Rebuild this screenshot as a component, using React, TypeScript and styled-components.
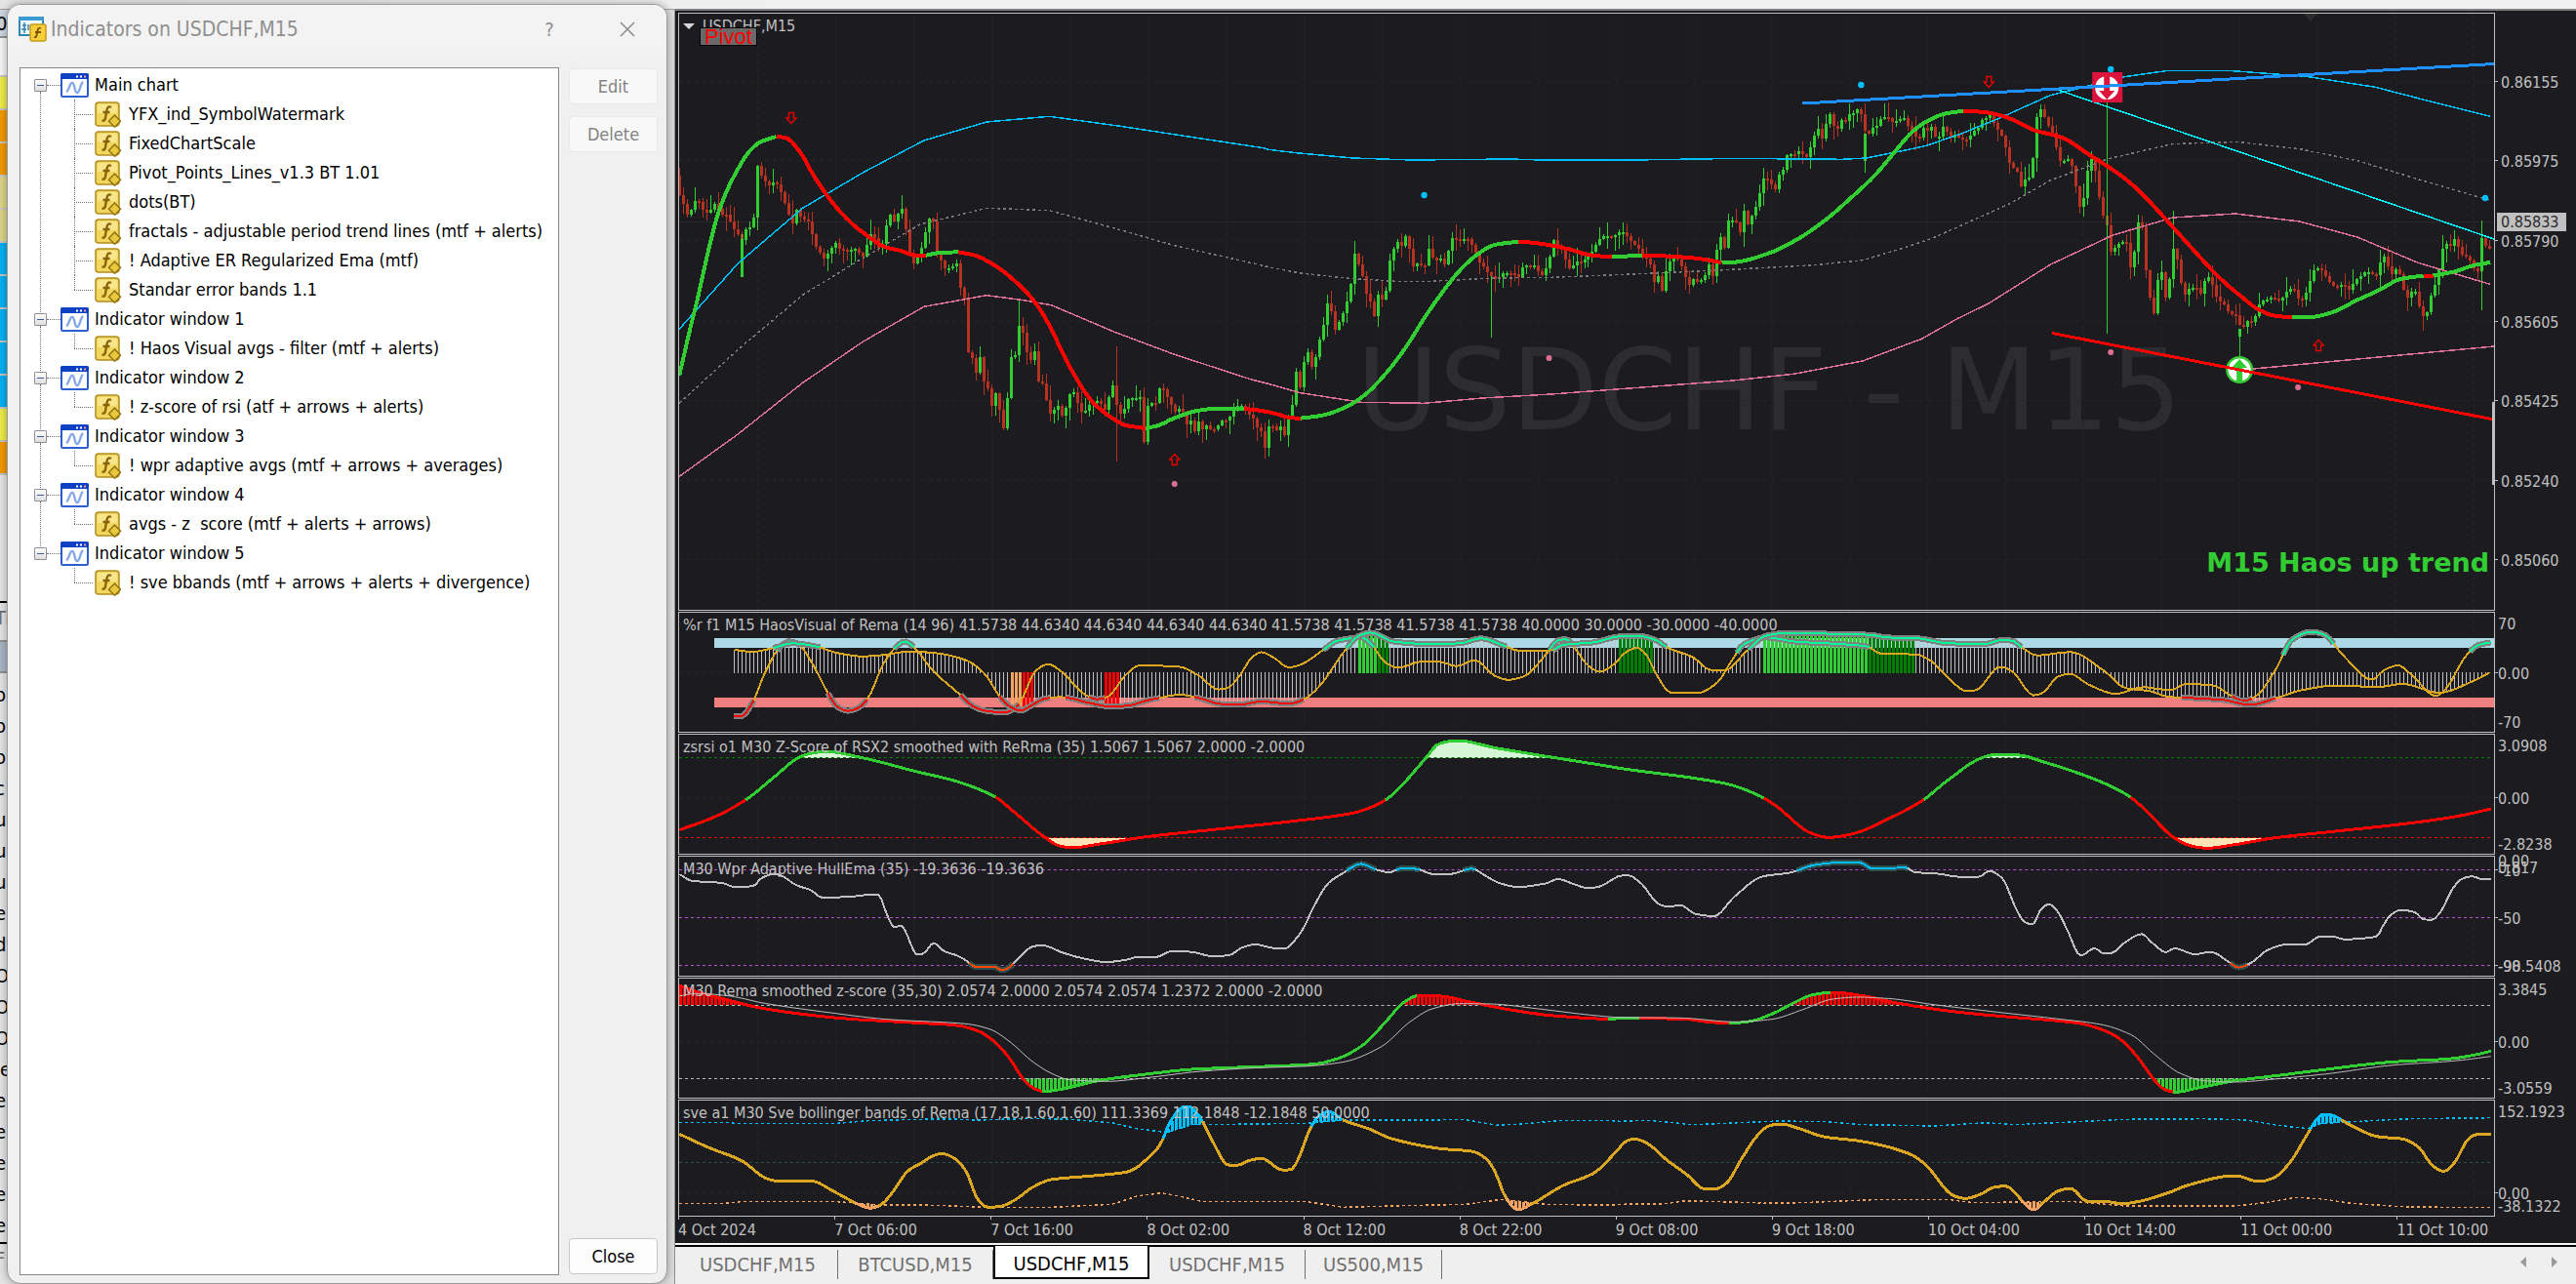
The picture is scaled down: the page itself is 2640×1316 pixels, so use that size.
import React from "react";
import styled, { createGlobalStyle, css } from "styled-components";

const UI = `"DejaVu Sans Condensed", "Noto Sans", sans-serif`;
const INK = "#1c1c20";
const LINE = "#c0c0c0";
const LIME = "#32cd32";
const SKY = "#00bfff";
const ROSE = "#db7093";
const GOLD = "#daa520";

const Global = createGlobalStyle`
  * { box-sizing: border-box; }
  body { margin: 0; background: #ececec; font-family: ${UI}; overflow: hidden; }
  ul { list-style: none; margin: 0; padding: 0; }
  button { font-family: inherit; margin: 0; }
`;

/* ---------- data helpers ---------- */

type Pt = [number, number];
type Frame = { x: number; y: number; sx: number; sy: number };

const early: Frame = { x: 690, y: 0, sx: 650 / 1568, sy: 1 / 3 };
const middle: Frame = { x: 1300, y: 0, sx: 650 / 1568, sy: 1 / 3 };
const late: Frame = { x: 1950, y: 0, sx: 690 / 1566, sy: 630 / 1568 };
const west: Frame = { x: 690, y: 600, sx: 0.625, sy: 1 / 3 };
const east: Frame = { x: 1660, y: 600, sx: 0.625, sy: 1 / 3 };
const westLow: Frame = { x: 690, y: 950, sx: 0.625, sy: 1 / 3 };
const eastLow: Frame = { x: 1660, y: 950, sx: 0.625, sy: 1 / 3 };

const place = (f: Frame, flat: number[]): Pt[] => {
  const out: Pt[] = [];
  for (let i = 0; i < flat.length; i += 2) out.push([f.x + flat[i] * f.sx, f.y + flat[i + 1] * f.sy]);
  return out;
};

const join = (...parts: Pt[][]): Pt[] => {
  const out: Pt[] = [];
  parts.flat().forEach((p) => {
    if (!out.length || p[0] > out[out.length - 1][0] + 1) out.push(p);
  });
  return out;
};

const linearAt = (pts: Pt[], x: number) => {
  if (x <= pts[0][0]) return pts[0][1];
  for (let i = 1; i < pts.length; i++) {
    if (x <= pts[i][0]) {
      const [x0, y0] = pts[i - 1];
      const [x1, y1] = pts[i];
      return y0 + ((y1 - y0) * (x - x0)) / (x1 - x0);
    }
  }
  return pts[pts.length - 1][1];
};

/* one value per bar, eased through the anchors without overshoot */
const perBar = (pts: Pt[], step = 4): Pt[] => {
  const n = pts.length;
  const d = pts.slice(1).map((p, i) => (p[1] - pts[i][1]) / (p[0] - pts[i][0]));
  const m = pts.map((_, i) => {
    if (i === 0) return d[0];
    if (i === n - 1) return d[n - 2];
    return d[i - 1] * d[i] <= 0 ? 0 : (2 * d[i - 1] * d[i]) / (d[i - 1] + d[i]);
  });
  const out: Pt[] = [];
  let i = 0;
  for (let x = pts[0][0]; x <= pts[n - 1][0]; x += step) {
    while (i < n - 2 && x > pts[i + 1][0]) i++;
    const h = pts[i + 1][0] - pts[i][0];
    const t = (x - pts[i][0]) / h;
    const a = 2 * t ** 3 - 3 * t ** 2 + 1;
    const b = t ** 3 - 2 * t ** 2 + t;
    const c = -2 * t ** 3 + 3 * t ** 2;
    const e = t ** 3 - t ** 2;
    out.push([x, a * pts[i][1] + b * h * m[i] + c * pts[i + 1][1] + e * h * m[i + 1]]);
  }
  out.push(pts[n - 1]);
  return out;
};

const toPath = (pts: Pt[]) => "M" + pts.map((p) => `${p[0].toFixed(1)} ${p[1].toFixed(1)}`).join("L");

/* split a curve in runs that share one colour */
const runs = (pts: Pt[], pick: (p: Pt) => string) => {
  const out: { color: string; pts: Pt[] }[] = [];
  pts.forEach((p, i) => {
    const color = pick(p);
    const last = out[out.length - 1];
    if (last && last.color === color) last.pts.push(p);
    else {
      const start: Pt[] = i ? [pts[i - 1], p] : [p];
      out.push({ color, pts: start });
    }
  });
  return out;
};

const noise = (k: number) => {
  const v = Math.sin(k * 127.1 + 11.7) * 43758.5453;
  return v - Math.floor(v);
};

/* ---------- price data ---------- */

const closes = join(
  place(early, [15,600,25,630,35,665,45,640,60,600,65,640,85,655,103,625,123,665,132,660,150,705,160,720,170,740,180,700,190,700,200,660,208,500,218,545,237,570,250,555,265,590,285,660,295,690,305,640,315,670,333,680,352,760,372,795,382,780,400,745,410,765,430,770,450,765,468,790,480,745,490,710,508,765,518,745,528,680,537,655,547,685,557,650,566,640,576,720,585,785,595,815,613,760,623,710,635,660,645,690,653,800,662,800,672,830,690,820,700,810,710,890,720,920,730,1110,740,1100,750,1160,758,1095,768,1180,780,1200,790,1275,797,1200,807,1270,817,1325,826,1210,836,1080,846,1095,855,990,865,1030,875,1095,885,1110,894,1075,904,1195,914,1175,923,1240,933,1278,943,1255,952,1245,962,1285,972,1245,981,1205,991,1205,1000,1245,1010,1270,1020,1260,1030,1240,1050,1230,1067,1260,1077,1215,1087,1180,1096,1250,1106,1275,1115,1255,1125,1225,1135,1225,1155,1220,1163,1365,1173,1240,1193,1240,1203,1185,1213,1200,1222,1225,1241,1270,1255,1250,1270,1310,1280,1290,1290,1335,1300,1285,1310,1330,1320,1300,1330,1330,1345,1310,1357,1290,1367,1295,1380,1270,1390,1250,1410,1245,1425,1280,1435,1290,1445,1320,1455,1330,1464,1390]),
  place(middle, [0,1310,10,1310,20,1325,30,1310,38,1340,50,1270,60,1240,70,1110,78,1200,88,1100,98,1080,108,1140,118,1085,128,1030,138,985,147,915,157,970,166,1025,176,980,186,955,195,920,205,860,214,760,224,825,234,855,243,915,253,930,262,980,272,890,281,925,291,890,300,790,310,760,320,740,330,760,339,722,349,775,359,830,369,805,380,820,390,815,398,745,407,805,417,800,427,795,437,820,446,755,456,725,466,740,475,735,493,735,503,755,513,780,523,815,533,820,541,840,551,850,561,860,580,840,600,840,610,845,620,855,630,810,640,820,650,825,659,810,669,845,679,845,689,810,697,780,706,730,716,765,725,770,735,805,745,830,755,810,765,800,775,810,785,790,800,775,812,750,822,730,835,725,852,730,862,720,872,710,882,715,892,735,902,748,912,755,920,770,930,790,940,800,948,820,957,880,967,840,976,905,986,820,996,800,1005,785,1015,800,1025,825,1035,860,1044,880,1053,855,1063,870,1073,860,1082,845,1092,805,1102,860,1110,765,1120,725,1130,765,1140,665,1150,680,1160,685,1170,725,1178,640,1188,695,1198,658,1207,635,1217,590,1227,540,1237,555,1247,570,1256,585,1265,530,1275,520,1285,470,1295,475,1305,475,1315,460,1324,480,1333,485,1343,445,1352,412,1362,395,1371,430,1381,375,1391,345,1401,395,1411,395,1420,365,1430,375,1440,345,1450,350,1460,328,1468,355,1478,412,1488,412,1497,388,1507,385,1516,362,1526,358,1536,365,1545,378,1555,370]),
  place(late, [5,300,15,325,25,335,33,352,42,350,52,320,62,340,70,320,80,360,88,345,97,320,107,340,116,355,125,340,135,355,150,355,160,345,170,330,180,325,188,300,197,300,207,290,216,325,225,335,234,350,243,385,252,425,262,430,270,440,279,485,288,450,298,455,307,380,315,275,325,280,335,310,343,325,352,345,361,388,370,420,380,405,388,405,397,430,406,490,416,545,425,485,433,420,443,400,452,450,461,525,470,560,479,580,487,655,497,625,507,620,515,615,525,620,533,700,543,620,552,545,561,590,570,730,579,770,588,810,597,680,606,700,615,780,624,690,633,618,643,680,652,740,660,755,670,730,680,735,688,735,697,755,707,695,716,715,725,735,734,770,745,770,754,785,762,805,772,800,779,805,788,840,797,830,806,815,815,825,825,795,834,765,845,770,852,758,862,760,870,762,880,768,888,755,897,740,907,735,916,742,925,775,935,755,943,740,952,705,961,680,978,690,988,710,997,725,1007,730,1016,735,1025,720,1034,735,1042,742,1052,715,1062,710,1070,700,1080,690,1090,698,1100,700,1107,702,1116,645,1125,660,1133,690,1142,705,1152,675,1160,710,1170,755,1178,760,1187,740,1197,745,1206,800,1216,812,1225,785,1233,735,1243,720,1252,665,1260,620,1270,622,1278,630,1288,598,1297,650,1306,650,1316,660,1325,670,1334,695,1343,690,1351,562,1360,655,1369,625]),
);

const candles = Array.from({ length: 465 }, (_, k) => {
  const x = 696 + k * 4;
  const close = linearAt(closes, x);
  const open = k ? linearAt(closes, x - 4) : close - 20;
  const top = Math.min(open, close);
  const bottom = Math.max(open, close, top + 2);
  return {
    x,
    up: close < open,
    top,
    bottom,
    high: top - noise(k) ** 2 * 14 - 1,
    low: bottom + noise(k + 900) ** 2 * 14 + 1,
  };
});

const spikes: { x: number; y1: number; y2: number; up: boolean; body?: [number, number] }[] = [
  { x: 760, y1: 240, y2: 284, up: true, body: [245, 284] },
  { x: 1044, y1: 307, y2: 330, up: true },
  { x: 1144, y1: 355, y2: 473, up: false },
  { x: 1528, y1: 283, y2: 346, up: true },
  { x: 1912, y1: 137, y2: 177, up: true, body: [137, 165] },
  { x: 2160, y1: 105, y2: 342, up: true },
  { x: 2228, y1: 216, y2: 280, up: true },
  { x: 2296, y1: 337, y2: 366, up: true, body: [337, 345] },
  { x: 2544, y1: 226, y2: 318, up: true },
];

const trendRuns: { color: string; pts: Pt[] }[] = [
  { color: LIME, pts: place(early, [15,1155,40,1020,60,920,85,780,110,660,135,580,160,520,185,470,215,437,255,420]) },
  { color: "#ff0000", pts: place(early, [255,420,277,423,315,470,345,535,395,625,440,685,480,725,525,760,560,770,600,785,625,785]) },
  { color: LIME, pts: place(early, [625,785,660,777,705,775]) },
  { color: "#ff0000", pts: place(early, [705,775,745,785,800,820,850,870,895,930,930,1000,965,1090,1000,1170,1040,1240,1085,1285,1120,1308,1168,1317]) },
  { color: LIME, pts: place(early, [1168,1317,1200,1308,1240,1285,1300,1262,1340,1257,1412,1257]) },
  { color: "#ff0000", pts: place(early, [1412,1257,1450,1262,1490,1272,1530,1285,1551,1286]) },
  { color: LIME, pts: place(middle, [80,1286,130,1278,190,1253,240,1213,300,1135,350,1050,385,980,430,900,475,830,520,780,560,753,618,743]) },
  { color: "#ff0000", pts: place(middle, [618,743,660,747,740,765,800,785,850,790]) },
  { color: LIME, pts: place(middle, [850,790,925,785]) },
  { color: "#ff0000", pts: place(middle, [925,785,990,788,1050,793,1090,800,1122,808]) },
  { color: LIME, pts: join(place(middle, [1122,808,1155,806,1240,778,1310,735,1385,670,1440,610,1500,540]), place(late, [0,365,25,335,60,308,100,290,142,283])) },
  { color: "#ff0000", pts: place(late, [142,283,190,286,240,298,310,333,370,350,440,398,490,433,540,475,610,555,680,640,740,710,790,757,830,790,865,805,908,810]) },
  { color: LIME, pts: place(late, [908,810,950,809,1000,797,1060,765,1110,740,1160,712,1213,703]) },
  { color: "#ff0000", pts: place(late, [1213,703,1236,703]) },
  { color: LIME, pts: place(late, [1236,703,1285,693,1330,677,1369,669]) },
];

const bandTop = join(
  place(early, [15,1012,160,810,320,640,470,530,620,432,775,375,930,358,1100,387,1460,455]),
  place(middle, [0,460,70,470,210,486,355,492,600,489,675,492,900,492,1110,488,1240,488,1420,490,1480,486]),
  place(late, [0,385,55,372,140,340,230,300,345,243,425,222,490,200,620,180,770,181,940,195,1100,222,1210,253,1368,297]),
);
const bandMid = join(
  place(early, [15,1240,160,1075,320,907,460,800,610,690,775,640,930,647,1100,705,1240,755,1400,800]),
  place(middle, [5,822,80,840,200,856,330,866,400,865,560,855,700,853,900,843,1100,832,1350,815,1470,800]),
  place(late, [0,634,70,608,250,520,345,460,480,405,630,367,780,362,925,380,1060,410,1200,457,1350,505,1368,510]),
);
const bandLow = join(
  place(early, [15,1465,160,1335,320,1177,470,1050,620,943,775,908,860,922,935,938,1090,1020,1240,1090,1430,1167]),
  place(middle, [0,1180,80,1208,230,1237,385,1240,530,1224,700,1212,1150,1170,1300,1150,1470,1110]),
  place(late, [0,883,45,865,130,812,200,775,345,675,490,600,630,555,775,545,925,565,1060,605,1200,670,1368,725]),
);

/* ---------- oscillator data ---------- */

const haosSlow = perBar(join(
  place(west, [100,198,130,204,165,192,195,178,235,188,270,208,310,218,350,213,385,203,430,208,480,230,510,270,535,340,550,370,570,385,585,372,610,348,635,343,680,360,715,372,745,370,775,355,800,345,830,336,860,345,900,365,930,366,965,357,1010,364,1035,350,1060,310,1100,205,1125,155,1145,145,1160,155,1180,172,1240,180,1290,178,1325,163,1365,187,1385,200,1440,200,1460,183,1510,175]),
  place(east, [0,157,30,155,60,168,80,192,120,220,150,260,172,262,210,200,240,155,270,147,410,152,440,160,490,163,540,178,600,180,628,168,645,170,660,190,685,215,740,205,795,262,830,315,870,325,900,342,945,347,990,352,1035,367,1080,345,1120,322,1175,308,1245,312,1285,303,1345,330,1400,295,1428,268]),
));
const haosFast = perBar(join(
  place(west, [100,402,112,402,130,360,150,270,175,190,190,172,205,180,225,230,255,335,270,375,288,386,305,375,320,345,345,240,365,190,380,172,395,190,425,260,470,335,495,375,520,388,545,390,565,370,595,262,615,242,635,262,675,335,695,350,710,345,745,270,765,246,830,250,860,275,895,320,910,315,930,275,950,220,965,205,985,222,1010,252,1030,243,1065,200,1090,170,1130,160,1145,180,1170,240,1190,253,1225,235,1255,234,1285,248,1315,230,1350,280,1370,290,1395,280,1435,205,1450,170,1465,165,1480,195,1500,245,1520,265,1545,240]),
  place(east, [0,225,15,200,30,192,45,215,60,270,85,330,130,330,160,300,185,230,205,180,240,160,290,173,340,178,375,182,405,187,430,210,485,212,510,230,540,285,570,325,585,322,625,250,645,265,680,338,695,330,720,280,740,272,770,305,815,333,860,313,905,322,930,303,975,308,1000,335,1025,355,1045,340,1075,265,1105,165,1135,143,1155,150,1190,220,1235,290,1255,260,1278,246,1300,275,1340,340,1355,320,1390,215,1410,183,1430,175]),
));
const haosBars: [number, number, string][] = [
  [1035, 1046, "#f4a460"],
  [1046, 1059, "#ff0000"],
  [1131, 1147, "#ff0000"],
  [1391, 1410, LIME],
  [1410, 1423, "#008000"],
  [1658, 1695, "#008000"],
  [1806, 1915, LIME],
  [1915, 1963, "#008000"],
];

const zsrsi = perBar(join(
  place(west, [10,752,70,710,122,655,165,590,210,525,230,515,250,511,310,530,400,573,460,600,528,650,555,690,610,775,635,802,655,806,700,795,780,772,880,752,1030,722,1115,700,1150,678,1172,655,1200,605,1235,530,1255,488,1285,477,1350,500,1440,528,1540,558]),
  place(east, [0,562,120,592,180,612,230,647,255,675,315,762,343,775,380,765,450,710,500,658,535,605,595,530,615,521,650,521,700,545,785,600,832,643,860,685,912,778,940,802,965,808,1010,797,1080,775,1170,757,1310,728,1380,708,1430,687]),
));

const wpr = perBar(join(
  place(west, [10,888,30,908,80,915,100,927,130,925,145,900,165,887,180,895,200,920,225,937,245,960,290,957,330,950,337,952,350,1010,362,1050,375,1047]),
  place(westLow, [380,10,400,85,410,82,427,50,445,75,465,88,480,103,495,122,525,122,540,133,550,125,570,90,590,60,605,57,640,80,675,98,710,108,740,102,765,92,790,93,820,74,850,77,885,90,910,88,935,62,955,54,985,65,1005,66,1020,40,1035,0]),
  place(west, [1050,990,1075,915,1100,883,1115,865,1127,856,1155,875,1175,882,1195,870,1220,872,1245,887,1275,887,1310,871,1330,890,1355,915,1385,927,1430,917,1452,903,1475,917,1500,930,1515,928,1545,900]),
  place(east, [0,893,15,892,35,915,65,980,80,988,100,983,125,1010,155,1017,190,955,235,895,280,883,320,860,355,853,395,853,415,870,430,870,470,868,485,882,520,886,560,896,590,896,607,878,628,900,650,990,665,1035,678,1042,692,995,705,980,720,1005]),
  place(eastLow, [735,10,757,88,780,66,795,82,808,80,828,50,857,22,875,50,897,78,910,66,945,84,970,77,1000,108,1015,125,1035,112,1065,70,1095,54,1125,54,1150,30,1170,30,1190,38,1243,30,1252,0]),
  place(east, [1265,1015,1282,998,1305,1005,1320,1027,1333,1028,1345,1010,1370,925,1385,900,1400,895,1415,903,1430,903]),
), 3);

const zScore = perBar(join(
  place(westLow, [10,180,40,200,90,225,140,248,220,270,290,283,380,293,465,303,500,320,525,350,550,400,575,470,590,495,608,506,640,498,700,472,780,452,850,438,940,431,1050,422,1090,405,1130,365,1165,300,1200,230,1225,210,1260,213,1310,232,1380,257,1450,274,1540,283]),
  place(eastLow, [0,281,38,281,110,284,150,293,180,296,215,290,250,268,290,230,315,210,350,201,400,212,450,232,500,248,560,263,640,277,750,295,795,318,825,350,850,400,880,475,895,500,912,508,950,495,1010,473,1080,457,1160,438,1270,415,1360,406,1400,395,1430,382]),
));
const zGreen: [number, number][] = [[1070, 1456], [1652, 1684], [1773, 1879], [2230, 2560]];
const zSignal = perBar(join(
  place(westLow, [10,212,40,205,90,212,150,235,250,262,350,284,480,298,520,315,550,350,590,415,620,450,650,470,710,475,780,463,860,445,950,434,1040,428,1100,415,1160,370,1210,290,1245,252,1290,236,1340,237,1420,252,1500,270]),
  place(eastLow, [0,278,100,280,190,292,250,284,300,255,350,222,390,216,440,220,520,240,620,262,720,283,790,300,840,332,880,395,920,450,960,473,1010,477,1080,467,1160,452,1270,425,1370,412,1430,398]),
));

const sve = perBar(join(
  place(westLow, [10,637,60,680,110,717,155,775,170,781,225,781,265,815,300,850,323,865,340,855,360,815,385,750,405,728,425,705,440,697,460,710,480,750,500,840,515,862,535,860,560,840,590,800,620,777,690,765,745,753,785,700,800,665,815,600,835,555,845,552,860,575,885,660,910,732,925,733,945,718,965,712,1000,748,1015,745,1025,715,1045,620,1060,580,1075,567,1100,595,1140,620,1180,652,1260,682,1310,690,1335,715,1350,760,1365,830,1385,870,1410,850,1460,795,1510,757]),
  place(eastLow, [0,680,10,660,25,652,45,665,80,720,110,760,140,806,155,807,175,790,200,715,225,645,245,612,265,606,295,620,335,645,400,660,475,697,500,727,550,828,568,835,595,820,615,800,635,797,650,820,680,870,700,840,720,812,740,804,768,844,800,845,825,851,850,845,900,818,935,793,1010,765,1050,783,1075,770,1100,725,1125,650,1145,590,1155,576,1165,577,1200,610,1245,645,1285,652,1310,675,1335,735,1353,752,1370,725,1395,648,1410,637,1430,639]),
));
const sveUpper = join(
  place(westLow, [10,601,90,602,100,604,270,604,320,596,400,592,460,591,500,594,590,589,650,592,720,602,760,620,810,632,850,608,920,607,1040,604,1100,594,1300,593,1350,610,1400,605,1450,596,1540,596]),
  place(eastLow, [0,598,50,595,120,608,260,597,340,599,400,608,520,612,600,602,650,608,830,592,960,590,1030,594,1080,610,1130,620,1150,605,1230,596,1300,590,1430,587]),
);
const sveLower = join(
  place(westLow, [10,850,85,850,110,845,270,845,340,855,430,856,510,862,620,862,720,853,760,828,800,818,830,828,870,845,1040,845,1100,862,1200,857,1300,853,1360,838,1430,853,1540,856]),
  place(eastLow, [0,853,70,852,110,842,240,849,300,848,430,838,540,838,580,848,740,844,830,858,1010,858,1060,848,1110,832,1150,836,1200,850,1290,861,1430,863]),
);

/* ---------- page shell ---------- */

const Page = styled.div`
  position: relative;
  display: flex;
  flex-direction: column;
  height: 100vh;
  min-height: 900px;
  background: #e6e6e6;
`;
const ToolStrip = styled.div`
  flex: none;
  height: 9px;
  background: linear-gradient(90deg, #e4e4e4, #f0f0f0 30%);
`;
const Body = styled.div`
  flex: 1;
  min-height: 0;
  display: flex;
`;

/* ---------- market watch ---------- */

const Market = styled.aside`
  flex: none;
  width: 692px;
  display: flex;
  overflow: hidden;
  background: #e4e4e4;
  border-top: 1px solid #a0a0a0;
  border-right: 1px solid #909090;
`;
const MarketList = styled.div`
  flex: 1;
  min-width: 0;
  display: flex;
  flex-direction: column;
`;
const Splitter = styled.div`
  flex: none;
  width: 18px;
  background: #dcdcdc;
`;
const Quote = styled.div<{ $bg: string }>`
  flex: none;
  height: 34px;
  border-bottom: 2px solid #c4c4c4;
  background: ${(p) => p.$bg};
`;
const QuoteHead = styled.div`
  flex: none;
  height: 29px;
  padding-left: 1px;
  border-bottom: 2px solid #909090;
  background: #cdd6e2;
  font-size: 20px;
  line-height: 28px;
  text-indent: -5px;
`;
const Gap = styled.div<{ $h: number; $bg?: string; $line?: string }>`
  flex: none;
  height: ${(p) => p.$h}px;
  background: ${(p) => p.$bg || "transparent"};
  border-bottom: 2px solid ${(p) => p.$line || "transparent"};
`;
const NavRow = styled.div<{ $dim?: boolean }>`
  flex: none;
  height: 32px;
  line-height: 30px;
  font-size: 20px;
  text-indent: -5px;
  white-space: nowrap;
  color: ${(p) => (p.$dim ? "#707070" : "#000")};
`;

/* ---------- dialog ---------- */

const Dialog = styled.section`
  position: absolute;
  left: 7px;
  top: 4px;
  bottom: 0;
  width: 677px;
  display: flex;
  flex-direction: column;
  background: #f0f0f0;
  border: 1px solid #9c9c9c;
  border-radius: 14px;
  box-shadow: 0 0 8px rgba(0, 0, 0, 0.35);
  overflow: hidden;
`;
const TitleBar = styled.header`
  flex: none;
  height: 50px;
  display: flex;
  align-items: center;
  padding: 0 22px 0 11px;
  background: #f3f3f3;
  color: #8f8f8f;
`;
const Title = styled.h1`
  flex: 1;
  margin: 0 0 0 4px;
  font-size: 21px;
  font-weight: 400;
`;
const TitleButton = styled.button`
  width: 36px;
  height: 36px;
  margin-left: 44px;
  padding: 0;
  border: 0;
  background: none;
  color: #8f8f8f;
  font-size: 20px;
  line-height: 36px;
  display: grid;
  place-items: center;
`;
const DialogBody = styled.div`
  flex: 1;
  min-height: 0;
  display: flex;
  gap: 10px;
  padding: 14px 9px 8px 12px;
`;
const Tree = styled.div`
  flex: 1;
  min-width: 0;
  overflow: hidden;
  background: #fff;
  border: 1px solid #828790;
  padding-top: 2px;
  font-size: 18px;
  line-height: 30px;
`;
const Group = styled.li`
  position: relative;
  &:not(:last-child)::before {
    content: "";
    position: absolute;
    left: 20px;
    top: 22px;
    bottom: -8px;
    border-left: 1px dotted #707070;
  }
`;
const GroupRow = styled.div`
  display: flex;
  align-items: center;
  height: 30px;
  padding-left: 14px;
  white-space: nowrap;
`;
const Toggle = styled.button`
  width: 13px;
  height: 13px;
  padding: 0;
  border: 1px solid #919191;
  border-radius: 1px;
  background: linear-gradient(#fff, #dedede);
  display: grid;
  place-items: center;
  &::after {
    content: "";
    width: 7px;
    height: 1px;
    background: #3a5a9a;
  }
`;
const Dots = styled.span<{ $w: number }>`
  flex: none;
  width: ${(p) => p.$w}px;
  border-top: 1px dotted #707070;
`;
const GroupName = styled.span`
  margin-left: 6px;
`;
const Leaf = styled.li`
  position: relative;
  display: flex;
  align-items: center;
  gap: 2px;
  height: 30px;
  margin-left: 55px;
  white-space: pre;
  &::before {
    content: "";
    position: absolute;
    left: 0;
    top: 0;
    height: 15px;
    border-left: 1px dotted #707070;
  }
  &:not(:last-child)::before {
    height: 30px;
  }
`;
const LeafName = styled.span`
  margin-left: 5px;
`;
const Actions = styled.div`
  flex: none;
  width: 91px;
  display: flex;
  flex-direction: column;
  gap: 12px;
  padding: 1px 0;
`;
const PushButton = styled.button<{ $last?: boolean }>`
  height: 37px;
  padding: 0;
  border: 1px solid #e8e8e8;
  border-radius: 4px;
  background: #f8f8f8;
  color: #838383;
  font-size: 18px;
  ${(p) =>
    p.$last &&
    css`
      margin-top: auto;
      border-color: #c8c8c8;
      background: #fdfdfd;
      color: #000;
    `}
`;

const TitleIcon = () => (
  <svg width="29" height="26" viewBox="0 0 29 26">
    <rect x="1" y="1" width="24" height="18" fill="#eef8fd" stroke="#2f86b5" strokeWidth="2" />
    <rect x="0" y="0" width="26" height="4" fill="#3b9bd0" />
    <path d="M6 6v11M4 9h4M3 13h5M10 8v6" stroke="#2f7fae" strokeWidth="1.4" fill="none" />
    <rect x="12" y="8" width="16" height="17" rx="2" fill="#f7cf3b" stroke="#c89b12" strokeWidth="1.5" />
    <path d="M23 12c-2-1-3 0-3.400 2l-1 5c-.3 2-1.200 2.600-2.600 2M17 16h6" stroke="#7a5200" strokeWidth="1.800" fill="none" />
  </svg>
);
const WindowIcon = () => (
  <svg width="29" height="25" viewBox="0 0 29 25">
    <rect x="1" y="1" width="27" height="23" rx="1.500" fill="#fff" stroke="#2b5fd0" strokeWidth="2" />
    <path d="M0 2a2 2 0 0 1 2-2h25a2 2 0 0 1 2 2v4H0z" fill="#0b3fc4" />
    <path d="M16 3.500h2M20 3.500h2" stroke="#fff" strokeWidth="2" />
    <path d="M24 3.500h2" stroke="#ff9a8a" strokeWidth="2" />
    <path d="M6 19c3-1 3-9 6-9s2 10 5 10 3-9 6-11" fill="none" stroke="#86a8ea" strokeWidth="2.400" />
  </svg>
);
const FunctionIcon = () => (
  <svg width="28" height="28" viewBox="0 0 28 28">
    <rect x="1" y="2" width="24" height="24" rx="3" fill="#f1d75f" stroke="#b08d1e" strokeWidth="1.500" />
    <rect x="3" y="4" width="20" height="9" rx="2" fill="#f8e68c" />
    <path d="M17 7c-3-1.500-4 0-4.500 3l-1.500 8c-.4 2.500-1.500 3-3.500 2.500M8.500 12h7" stroke="#8a6408" strokeWidth="2.400" fill="none" />
    <path d="M20.500 15l6 6.200-6 6-6-6z" fill="#e9c83d" stroke="#927112" strokeWidth="1.500" />
  </svg>
);

const groups = [
  {
    name: "Main chart",
    items: [
      "YFX_ind_SymbolWatermark",
      "FixedChartScale",
      "Pivot_Points_Lines_v1.3 BT 1.01",
      "dots(BT)",
      "fractals - adjustable period trend lines (mtf + alerts)",
      "! Adaptive ER Regularized Ema (mtf)",
      "Standar error bands 1.1",
    ],
  },
  { name: "Indicator window 1", items: ["! Haos Visual avgs - filter (mtf + alerts)"] },
  { name: "Indicator window 2", items: ["! z-score of rsi (atf + arrows + alerts)"] },
  { name: "Indicator window 3", items: ["! wpr adaptive avgs (mtf + arrows + averages)"] },
  { name: "Indicator window 4", items: ["avgs - z  score (mtf + alerts + arrows)"] },
  { name: "Indicator window 5", items: ["! sve bbands (mtf + arrows + alerts + divergence)"] },
];

const IndicatorDialog = () => (
  <Dialog aria-label="Indicators on USDCHF,M15">
    <TitleBar>
      <TitleIcon />
      <Title>Indicators on USDCHF,M15</Title>
      <TitleButton>?</TitleButton>
      <TitleButton aria-label="Close window">
        <svg width="16" height="16" viewBox="0 0 16 16">
          <path d="M1 1l14 14M15 1L1 15" stroke="#8a8a8a" strokeWidth="1.500" />
        </svg>
      </TitleButton>
    </TitleBar>
    <DialogBody>
      <Tree>
        <ul>
          {groups.map((g) => (
            <Group key={g.name}>
              <GroupRow>
                <Toggle aria-label={`Collapse ${g.name}`} />
                <Dots $w={14} />
                <WindowIcon />
                <GroupName>{g.name}</GroupName>
              </GroupRow>
              <ul>
                {g.items.map((it) => (
                  <Leaf key={it}>
                    <Dots $w={19} />
                    <FunctionIcon />
                    <LeafName>{it}</LeafName>
                  </Leaf>
                ))}
              </ul>
            </Group>
          ))}
        </ul>
      </Tree>
      <Actions>
        <PushButton disabled>Edit</PushButton>
        <PushButton disabled>Delete</PushButton>
        <PushButton $last>Close</PushButton>
      </Actions>
    </DialogBody>
  </Dialog>
);

/* ---------- chart window ---------- */

const Workspace = styled.main`
  flex: 1;
  min-width: 0;
  display: flex;
  flex-direction: column;
`;
const ChartFrame = styled.div`
  flex: 1;
  min-height: 0;
  display: flex;
  flex-direction: column;
  border-top: 2px solid #808080;
  background: ${INK};
  padding: 2px 2px 0 3px;
`;
const Panes = styled.div`
  flex: 1;
  min-height: 0;
  display: grid;
  grid-template-rows: minmax(0, 613fr) repeat(4, minmax(0, 124fr)) minmax(0, 120fr);
  row-gap: 1px;
`;
const Pane = styled.section`
  min-height: 0;
  display: grid;
  grid-template-columns: minmax(0, 1fr) 81px;
`;
const Plot = styled.div`
  position: relative;
  min-width: 0;
  min-height: 0;
  display: grid;
  grid-template: minmax(0, 1fr) / minmax(0, 1fr);
  border: 1px solid ${LINE};
  overflow: hidden;
`;
const Canvas = styled.svg`
  grid-area: 1 / 1;
  display: block;
  width: 100%;
  height: 100%;
`;
const PaneTitle = styled.h2`
  grid-area: 1 / 1;
  z-index: 1;
  margin: 0;
  padding: 0 4px;
  font-size: 16px;
  line-height: 26px;
  font-weight: 400;
  color: ${LINE};
  white-space: nowrap;
  display: flex;
  align-items: center;
  align-self: start;
`;
const MenuMark = styled.span`
  width: 0;
  height: 0;
  margin-right: 8px;
  border: 6px solid transparent;
  border-top-color: #d8d8d8;
  border-bottom: 0;
`;
const PivotButton = styled.button`
  position: absolute;
  z-index: 2;
  left: 21px;
  top: 14px;
  width: 59px;
  height: 19px;
  padding: 0;
  border: 1px solid #000;
  background: #696969;
  color: #ff0000;
  font: 22px/16px "Liberation Sans", Arial, sans-serif;
`;
const Watermark = styled.div`
  grid-area: 1 / 1;
  place-self: center;
  padding-top: 160px;
  padding-left: 374px;
  font: 116px/120px "DejaVu Sans", sans-serif;
  color: #2d2d31;
  white-space: nowrap;
`;
const TrendNote = styled.div`
  grid-area: 1 / 1;
  z-index: 1;
  place-self: end;
  padding: 0 5px 31px 0;
  font: bold 27px/34px "DejaVu Sans", sans-serif;
  color: ${LIME};
  white-space: nowrap;
`;
const Axis = styled.div`
  position: relative;
  font-size: 16px;
  line-height: 20px;
  color: ${LINE};
`;
const Tick = styled.span<{ $inset: number; $mark: boolean }>`
  position: absolute;
  left: 0;
  padding-left: ${(p) => p.$inset}px;
  margin-top: -9px;
  ${(p) =>
    p.$mark &&
    css`
      &::before {
        content: "";
        position: absolute;
        left: 0;
        top: 8px;
        width: 3px;
        border-top: 1px solid ${LINE};
      }
    `}
`;
const PriceTag = styled.span`
  position: absolute;
  left: 2px;
  right: 8px;
  height: 19px;
  margin-top: -10px;
  padding-left: 4px;
  line-height: 20px;
  background: ${LINE};
  color: #2a2a2e;
`;
const TimeAxis = styled.ol`
  flex: none;
  display: flex;
  height: 29px;
  margin: 0 81px 0 0;
  padding: 0;
  list-style: none;
  color: ${LINE};
  font-size: 16px;
  line-height: 26px;
`;
const TimeTick = styled.li`
  flex: 0 0 8.6%;
  white-space: nowrap;
  &::before {
    content: "";
    display: block;
    width: 1px;
    height: 3px;
    margin-bottom: -2px;
    background: ${LINE};
  }
`;
const Tabs = styled.nav`
  flex: none;
  height: 40px;
  display: flex;
  align-items: flex-start;
  padding-left: 3px;
  border-top: 2px solid #000;
  box-shadow: 0 -2px 0 #f4f4f4;
  background: #efefef;
`;
const Tab = styled.button<{ $active?: boolean; $w: number }>`
  width: ${(p) => p.$w}px;
  height: 30px;
  margin: 3px 0 0;
  padding: 0;
  border: 0;
  border-right: 1px solid #707070;
  background: none;
  color: #707070;
  font-size: 20px;
  line-height: 28px;
  ${(p) =>
    p.$active &&
    css`
      height: 34px;
      margin-top: -1px;
      padding-top: 3px;
      background: #fff;
      border: 2px solid #000;
      border-width: 0 2px 2px;
      color: #000;
    `}
`;
const Scrollers = styled.div`
  margin-left: auto;
  display: flex;
  gap: 20px;
  padding: 9px 16px 0 0;
`;
const ScrollButton = styled.button`
  width: 12px;
  height: 12px;
  padding: 0;
  border: 0;
  background: none;
  display: grid;
  place-items: center;
`;

/* ---------- drawing parts ---------- */

const Grid = ({ y1, y2, rows = [] }: { y1: number; y2: number; rows?: number[] }) => (
  <g stroke="#26261f" strokeDasharray="4 4">
    {Array.from({ length: 23 }, (_, i) => (
      <line key={i} x1={776.5 + i * 80} x2={776.5 + i * 80} y1={y1} y2={y2} />
    ))}
    {rows.map((y) => (
      <line key={y} x1="696" x2="2557" y1={y} y2={y} />
    ))}
  </g>
);
const Level = ({ y, color }: { y: number; color: string }) => (
  <line x1="696" x2="2553" y1={y} y2={y} stroke={color} strokeWidth="1" strokeDasharray="3 3" />
);
const Curve = ({ pts, color, width = 1.5, dash }: { pts: Pt[]; color: string; width?: number; dash?: string }) => (
  <path d={toPath(pts)} fill="none" stroke={color} strokeWidth={width} strokeDasharray={dash} strokeLinejoin="round" />
);
const Arrow = ({ x, y, down }: { x: number; y: number; down?: boolean }) => (
  <path
    d="M0-5.500L5 0H2.500V5.500H-2.500V0H-5z"
    transform={`translate(${x} ${y})${down ? " rotate(180)" : ""}`}
    fill="none"
    stroke="#e00000"
    strokeWidth="1.500"
  />
);

type Label = { y: number; text: string; mark?: boolean };
const AxisColumn = ({ top, height, labels, inset = 3, price }: { top: number; height: number; labels: Label[]; inset?: number; price?: Label }) => (
  <Axis>
    {labels.map((l) => (
      <Tick key={l.text} $inset={inset} $mark={l.mark !== false} style={{ top: `${((l.y - top) / height) * 100}%` }}>
        {l.text}
      </Tick>
    ))}
    {price && <PriceTag style={{ top: `${((price.y - top) / height) * 100}%` }}>{price.text}</PriceTag>}
  </Axis>
);

const MainPane = () => (
  <Pane>
    <Plot>
      <PaneTitle>
        <MenuMark />
        USDCHF,M15
      </PaneTitle>
      <PivotButton>Pivot</PivotButton>
      <Watermark>USDCHF - M15</Watermark>
      <Canvas viewBox="696 14 1861 611" preserveAspectRatio="none" shapeRendering="crispEdges">
        <Grid y1={14} y2={625} rows={[83.5, 164.5, 246.5, 329.5, 410.5, 492.5, 573.5]} />
        <line x1="696" x2="2557" y1="227.500" y2="227.500" stroke="#28282a" />
        <path d="M2361 14h15l-7 8z" fill="#2c2c2c" />
        {candles.map((c) => (
          <g key={c.x} fill={c.up ? LIME : "#b83222"}>
            <rect x={c.x} y={c.high} width="1" height={c.low - c.high} />
            <rect x={c.x - 1} y={c.top} width="3" height={c.bottom - c.top} />
          </g>
        ))}
        {spikes.map((s) => (
          <g key={s.x} fill={s.up ? LIME : "#b83222"}>
            <rect x={s.x} y={s.y1} width="1" height={s.y2 - s.y1} />
            {s.body && <rect x={s.x - 1} y={s.body[0]} width="3" height={s.body[1] - s.body[0]} />}
          </g>
        ))}
        <Curve pts={bandTop} color={SKY} />
        <Curve pts={bandMid} color="#7a7a7a" dash="3 3" />
        <Curve pts={bandLow} color={ROSE} />
        <path d="M2305 378.500L2557 355" stroke={ROSE} strokeWidth="1.500" />
        <path d="M2111 92.500L2557 245" stroke="#00ffff" strokeWidth="1.500" />
        {trendRuns.map((r, i) => (
          <Curve key={i} pts={perBar(r.pts)} color={r.color} width={4} />
        ))}
        <g shapeRendering="auto">
          <rect x="2145" y="74" width="31" height="31" fill="#dc143c" />
          <circle cx="2160" cy="90" r="12" fill="#fff" />
          <path d="M2157 77h6v16h5l-8 9-8-9h5z" fill="#dc143c" />
          <circle cx="2296" cy="379" r="14" fill={LIME} />
          <circle cx="2296" cy="379" r="11.500" fill="#fff" />
          <path d="M2293 391h6v-14h5l-8-9-8 9h5z" fill={LIME} />
        </g>
        <path d="M1848 106L2557 65.500" stroke="#1e90ff" strokeWidth="3" />
        <path d="M2104 341.500L2557 430" stroke="#ff0000" strokeWidth="3" />
        <g shapeRendering="auto">
          <Arrow x={811} y={121} down />
          <Arrow x={2039} y={84} down />
          <Arrow x={1204} y={471} />
          <Arrow x={2377} y={354} />
          {[[1460, 200], [1908, 87], [2164, 71], [2548, 203]].map(([x, y]) => (
            <circle key={x} cx={x} cy={y} r="3.200" fill={SKY} />
          ))}
          {[[1204, 496], [1588, 367], [2164, 361], [2356, 397]].map(([x, y]) => (
            <circle key={x} cx={x} cy={y} r="3" fill={ROSE} />
          ))}
        </g>
        <rect x="2555" y="412" width="2" height="85" fill={LINE} />
      </Canvas>
      <TrendNote>M15 Haos up trend</TrendNote>
    </Plot>
    <AxisColumn
      top={13}
      height={613}
      inset={6}
      labels={[
        { y: 84, text: "0.86155" },
        { y: 165, text: "0.85975" },
        { y: 247, text: "0.85790" },
        { y: 330, text: "0.85605" },
        { y: 411, text: "0.85425" },
        { y: 493, text: "0.85240" },
        { y: 574, text: "0.85060" },
      ]}
      price={{ y: 228, text: "0.85833" }}
    />
  </Pane>
);

const haosColor = (p: Pt) => (p[1] < 664 ? "#00fa9a" : p[1] > 715 ? "#ff0000" : GOLD);

const HaosLine = ({ pts }: { pts: Pt[] }) => (
  <>
    {runs(pts, haosColor).map((r, i) => (
      <g key={i}>
        {r.color !== GOLD && <Curve pts={r.pts} color="#808080" width={6} />}
        <Curve pts={r.pts} color={r.color} width={2} />
      </g>
    ))}
  </>
);

const HaosPane = () => (
  <Pane>
    <Plot>
      <PaneTitle>
        %r f1 M15 HaosVisual of Rema (14 96) 41.5738 44.6340 44.6340 44.6340 44.6340 41.5738 41.5738 41.5738 41.5738 40.0000 30.0000 -30.0000 -40.0000
      </PaneTitle>
      <Canvas viewBox="696 628 1861 122" preserveAspectRatio="none" shapeRendering="crispEdges">
        <Grid y1={628} y2={750} rows={[689.5]} />
        <rect x="732" y="654" width="1825" height="10" fill="#add8e6" />
        <rect x="732" y="715" width="1825" height="10" fill="#f08080" />
        {haosSlow.map(([x, y]) => {
          const hit = haosBars.find(([a, b]) => x >= a && x < b);
          const bx = Math.round(x / 4) * 4;
          return (
            <rect
              key={x}
              x={bx}
              y={Math.min(y, 689)}
              width={hit ? 3 : 1}
              height={Math.abs(y - 689) + 1}
              fill={hit ? hit[2] : LINE}
            />
          );
        })}
        <HaosLine pts={haosFast} />
        <HaosLine pts={haosSlow} />
      </Canvas>
    </Plot>
    <AxisColumn top={627} height={124} labels={[{ y: 639, text: "70", mark: false }, { y: 690, text: "0.00" }, { y: 740, text: "-70", mark: false }]} />
  </Pane>
);

const fillBeyond = (pts: Pt[], level: number, above: boolean) =>
  toPath([
    [pts[0][0], level],
    ...pts.map(([x, y]): Pt => [x, above ? Math.min(y, level) : Math.max(y, level)]),
    [pts[pts.length - 1][0], level],
  ]) + "Z";

const ZsrsiPane = () => (
  <Pane>
    <Plot>
      <PaneTitle>zsrsi o1 M30 Z-Score of RSX2 smoothed with ReRma (35) 1.5067 1.5067 2.0000 -2.0000</PaneTitle>
      <Canvas viewBox="696 753 1861 122" preserveAspectRatio="none" shapeRendering="crispEdges">
        <Grid y1={753} y2={875} rows={[817.5]} />
        <path d={fillBeyond(zsrsi, 776.5, true)} fill="#d6f5d6" />
        <path d={fillBeyond(zsrsi, 858.5, false)} fill="#ffe4b5" />
        <Level y={776.5} color="#008000" />
        <Level y={858.5} color="#ff0000" />
        {runs(zsrsi, (p) => (p[1] < 818 ? LIME : "#ff0000")).map((r, i) => (
          <Curve key={i} pts={r.pts} color={r.color} width={3} />
        ))}
      </Canvas>
    </Plot>
    <AxisColumn top={752} height={124} labels={[{ y: 764, text: "3.0908", mark: false }, { y: 818, text: "0.00" }, { y: 865, text: "-2.8238", mark: false }]} />
  </Pane>
);

const WprPane = () => (
  <Pane>
    <Plot>
      <PaneTitle>M30 Wpr Adaptive HullEma (35) -19.3636 -19.3636</PaneTitle>
      <Canvas viewBox="696 878 1861 122" preserveAspectRatio="none" shapeRendering="crispEdges">
        <Grid y1={878} y2={1000} />
        <Level y={891.5} color="#ba55d3" />
        <Level y={940.5} color="#ba55d3" />
        <Level y={989.5} color="#ba55d3" />
        {runs(wpr, (p) => (p[1] < 891.5 ? SKY : p[1] > 988 ? "#ff4500" : LINE)).map((r, i) => (
          <g key={i}>
            {r.color !== LINE && <Curve pts={r.pts} color="#2f4f4f" width={6} />}
            <Curve pts={r.pts} color={r.color} width={2} />
          </g>
        ))}
      </Canvas>
    </Plot>
    <AxisColumn
      top={877}
      height={124}
      labels={[
        { y: 882, text: "0.00", mark: false },
        { y: 889, text: "0.817", mark: false },
        { y: 892, text: "-10" },
        { y: 941, text: "-50" },
        { y: 990, text: "-90" },
        { y: 990, text: "-98.5408", mark: false },
      ]}
    />
  </Pane>
);

const ZScorePane = () => (
  <Pane>
    <Plot>
      <PaneTitle>M30 Rema smoothed z-score (35,30) 2.0574 2.0000 2.0574 2.0574 1.2372 2.0000 -2.0000</PaneTitle>
      <Canvas viewBox="696 1003 1861 122" preserveAspectRatio="none" shapeRendering="crispEdges">
        <Grid y1={1003} y2={1125} rows={[1067.5]} />
        {zScore
          .filter(([, y]) => y < 1030 || y > 1106)
          .map(([x, y]) => {
            const level = y < 1067 ? 1030 : 1105;
            return (
              <rect key={x} x={Math.round(x / 4) * 4} y={Math.min(y, level)} width="3" height={Math.abs(y - level)} fill={y < 1067 ? "#ff0000" : LIME} />
            );
          })}
        <Level y={1030.5} color={LINE} />
        <Level y={1105.5} color={LINE} />
        {runs(zScore, ([x]) => (zGreen.some(([a, b]) => x >= a && x <= b) ? LIME : "#ff0000")).map((r, i) => (
          <Curve key={i} pts={r.pts} color={r.color} width={3} />
        ))}
        <Curve pts={zSignal} color={LINE} width={1} />
      </Canvas>
    </Plot>
    <AxisColumn top={1002} height={124} labels={[{ y: 1014, text: "3.3845", mark: false }, { y: 1068, text: "0.00" }, { y: 1115, text: "-3.0559", mark: false }]} />
  </Pane>
);

const sveColor = ([x, y]: Pt) =>
  y < linearAt(sveUpper, x) ? SKY : y > linearAt(sveLower, x) ? "#f4a460" : GOLD;

const SvePane = () => (
  <Pane>
    <Plot>
      <PaneTitle>sve a1 M30 Sve bollinger bands of Rema (17,18,1.60,1.60) 111.3369 112.1848 -12.1848 50.0000</PaneTitle>
      <Canvas viewBox="696 1128 1861 118" preserveAspectRatio="none" shapeRendering="crispEdges">
        <Grid y1={1128} y2={1246} rows={[1222.5]} />
        <Level y={1191.5} color="#2f4f4f" />
        {sve
          .filter((p) => sveColor(p) !== GOLD)
          .map(([x, y]) => {
            const blue = y < 1190;
            const level = linearAt(blue ? sveUpper : sveLower, x);
            return (
              <rect key={x} x={Math.round(x / 4) * 4} y={Math.min(y, level)} width="3" height={Math.abs(y - level)} fill={blue ? SKY : "#f4a460"} />
            );
          })}
        <Curve pts={sveUpper} color={SKY} dash="3 3" />
        <Curve pts={sveLower} color="#f4a460" dash="3 3" />
        {runs(sve, sveColor).map((r, i) => (
          <Curve key={i} pts={r.pts} color={r.color} width={3} />
        ))}
      </Canvas>
    </Plot>
    <AxisColumn top={1127} height={120} labels={[{ y: 1139, text: "152.1923", mark: false }, { y: 1223, text: "0.00" }, { y: 1236, text: "-38.1322", mark: false }]} />
  </Pane>
);

const times = ["4 Oct 2024", "7 Oct 06:00", "7 Oct 16:00", "8 Oct 02:00", "8 Oct 12:00", "8 Oct 22:00", "9 Oct 08:00", "9 Oct 18:00", "10 Oct 04:00", "10 Oct 14:00", "11 Oct 00:00", "11 Oct 10:00"];

const tabs = [
  { name: "USDCHF,M15", w: 164 },
  { name: "BTCUSD,M15", w: 159 },
  { name: "USDCHF,M15", w: 160, active: true },
  { name: "USDCHF,M15", w: 160 },
  { name: "US500,M15", w: 140 },
];

const quotes = ["#f6f6f6", "#ecec4a", "#f09a00", "#f09a00", "#dcd488", "#dcd488", "#00b0f0", "#00b0f0", "#00b0f0", "#00b0f0", "#00b0f0", "#ecec4a", "#f09a00"];
const navRows = ["o", "o", "o", "c", "up", "up", "up", "e", "df", "O", "O", "O", "ie", "e", "e", "e", "e", "e"];

export default function App() {
  return (
    <Page>
      <Global />
      <ToolStrip />
      <Body>
        <Market>
          <MarketList>
            <QuoteHead>0</QuoteHead>
            <Gap $h={6} $bg="#f6f6f6" $line="#f6f6f6" />
            {quotes.map((bg, i) => (
              <Quote key={i} $bg={bg} />
            ))}
            <Gap $h={131} $line="#000" />
            <NavRow $dim>Ti</NavRow>
            <Gap $h={8} $line="#909090" />
            <Gap $h={32} $bg="#a9b6c4" $line="#909090" />
            <Gap $h={7} />
            {navRows.map((t, i) => (
              <NavRow key={i}>{t}</NavRow>
            ))}
            <Gap $h={2} $line="#000" />
            <NavRow $dim>F</NavRow>
          </MarketList>
          <Splitter />
        </Market>
        <Workspace>
          <ChartFrame>
            <Panes>
              <MainPane />
              <HaosPane />
              <ZsrsiPane />
              <WprPane />
              <ZScorePane />
              <SvePane />
            </Panes>
            <TimeAxis>
              {times.map((t) => (
                <TimeTick key={t}>{t}</TimeTick>
              ))}
            </TimeAxis>
          </ChartFrame>
          <Tabs>
            {tabs.map((t, i) => (
              <Tab key={i} $w={t.w} $active={t.active}>
                {t.name}
              </Tab>
            ))}
            <Scrollers>
              <ScrollButton aria-label="Scroll tabs left">
                <svg width="6" height="11" viewBox="0 0 6 11">
                  <path d="M6 0v11L0 5.500z" fill="#9a9a9a" />
                </svg>
              </ScrollButton>
              <ScrollButton aria-label="Scroll tabs right">
                <svg width="6" height="11" viewBox="0 0 6 11">
                  <path d="M0 0v11l6-5.500z" fill="#9a9a9a" />
                </svg>
              </ScrollButton>
            </Scrollers>
          </Tabs>
        </Workspace>
      </Body>
      <IndicatorDialog />
    </Page>
  );
}
